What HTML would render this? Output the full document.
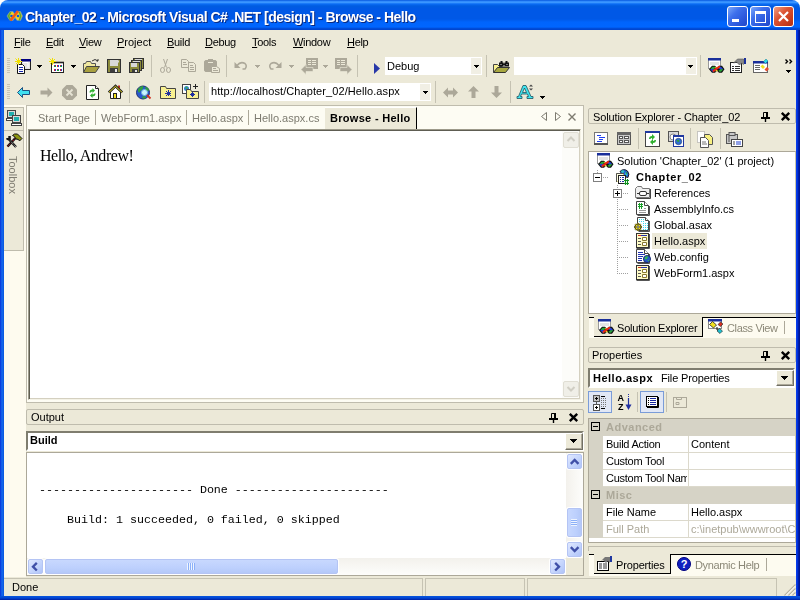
<!DOCTYPE html>
<html>
<head>
<meta charset="utf-8">
<title>Chapter_02 - Microsoft Visual C# .NET [design] - Browse - Hello</title>
<style>
html,body{margin:0;padding:0;}
body{width:800px;height:600px;overflow:hidden;position:relative;background:#ECE9D8;
 font-family:"Liberation Sans",sans-serif;font-size:11px;color:#000;}
.a{position:absolute;}
.t{position:absolute;white-space:nowrap;line-height:13px;height:13px;will-change:transform;}
.b{font-weight:bold;}
.g{color:#ACA899;}
u{text-decoration:underline;}
svg{position:absolute;overflow:visible;}
/* window frame */
#title{left:0;top:0;width:800px;height:30px;border-radius:8px 8px 0 0;
 background:linear-gradient(#0050D8 0,#2A82F8 1px,#3A96FF 2px,#3A96FF 2.500px,#0A6CF4 4px,#005CE0 6px,#0058E6 9px,#0058E6 19px,#0064FC 22px,#0066FF 27px,#004CD8 28.500px,#0042CC 30px);}
#bl{left:0;top:30px;width:4px;height:570px;background:linear-gradient(90deg,#0831D9 0,#166AEE 50%,#0855DD 100%);}
#br{left:796px;top:30px;width:4px;height:570px;background:linear-gradient(90deg,#0A40F0 0,#0030D8 40%,#00189C 70%,#00138C 100%);}
#bb{left:0;top:596px;width:800px;height:4px;background:linear-gradient(#0855DD 0,#0046D5 50%,#001EA0 100%);}
.wb{position:absolute;top:6px;width:19px;height:19px;border:1px solid #fff;border-radius:3px;
 background:linear-gradient(135deg,#7CA8FA 0,#3E70EC 35%,#2C58DC 70%,#2048C8 100%);}
#wclose{background:linear-gradient(135deg,#F0A084 0,#DC5434 40%,#C83C1C 75%,#B03014 100%);}

.grip{position:absolute;width:3px;height:15px;background:repeating-linear-gradient(#C9C5B4 0,#C9C5B4 1px,transparent 1px,transparent 2px);}
.sep{position:absolute;width:1px;height:22px;background:#C5C2B2;}
.dd{position:absolute;width:5px;height:3px;color:#000;background:linear-gradient(currentColor,currentColor) 0 0/5px 1px no-repeat,linear-gradient(currentColor,currentColor) 1px 1px/3px 1px no-repeat,linear-gradient(currentColor,currentColor) 2px 2px/1px 1px no-repeat;}
.dd7{position:absolute;width:7px;height:4px;color:#000;background:linear-gradient(currentColor,currentColor) 0 0/7px 1px no-repeat,linear-gradient(currentColor,currentColor) 1px 1px/5px 1px no-repeat,linear-gradient(currentColor,currentColor) 2px 2px/3px 1px no-repeat,linear-gradient(currentColor,currentColor) 3px 3px/1px 1px no-repeat;}
.ddg{color:#ACA899;}
.cb{position:absolute;height:18px;background:#fff;}
.cb .t{top:3px;left:2px;}
.cb i{position:absolute;right:1px;top:1px;bottom:1px;width:10px;background:#F1EFE4;}

/* left strip */
#stripbg{left:4px;top:105px;width:22px;height:472px;background:#FEFBEF;}
/* tab well */
#well{left:26px;top:105px;width:558px;height:298px;background:#FDFCF3;border:1px solid #BFBCAD;box-sizing:border-box;}
#docframe{left:28px;top:129px;width:553px;height:271px;box-sizing:border-box;border:1px solid;border-color:#9D9A8A #F4F2E6 #F4F2E6 #9D9A8A;box-shadow:inset 1px 1px 0 #5E5D52,inset -1px -1px 0 #D4D0C0;background:#fff;}
.tabt{color:#7D7B70;}
.tsep{position:absolute;width:1px;height:15px;top:110px;background:#ACA899;}
/* pane title */
.ptitle{position:absolute;height:14px;border:1px solid #BFBCAD;border-radius:2px;background:#ECE9D8;box-sizing:content-box;}
.white{background:#fff;}

.pin{position:absolute;}
.sbv{position:absolute;width:17px;background:linear-gradient(90deg,#F3F1EC 0,#FDFDFB 100%);}
.sbbtn{position:absolute;width:13px;height:13px;border:1px solid #B4C4F4;border-radius:2px;background:linear-gradient(135deg,#E0E8FF 0,#C2D3FC 60%,#B0C4F8 100%);box-shadow:0 0 0 1px #fff;}
.thumb{position:absolute;border:1px solid #B4C4F4;border-radius:2px;background:linear-gradient(#C8D8FE 0,#BDD0FD 60%,#B4C8F8 100%);box-shadow:0 0 0 1px #fff;}
.thumbv{position:absolute;border:1px solid #B4C4F4;border-radius:2px;background:linear-gradient(90deg,#C8D8FE 0,#BDD0FD 60%,#B4C8F8 100%);box-shadow:0 0 0 1px #fff;}
.combo{position:absolute;box-sizing:border-box;border:2px solid;border-color:#7F7D6F #fff #fff #7F7D6F;background:#fff;}
.cbtn{position:absolute;width:16px;height:15px;border:1px solid;border-color:#fff #716F64 #716F64 #fff;background:#ECE9D8;box-shadow:inset -1px -1px 0 #ACA899;}
.mono{font-family:"Liberation Mono",monospace;font-size:11.67px;white-space:pre;line-height:15px;height:15px;}

.tabstrip{position:absolute;left:589px;width:207px;height:20px;background:#FDFBF0;border-top:1px solid #000;}
.tabact{position:absolute;height:19px;background:#ECE9D8;border-right:1px solid #000;border-bottom:1px solid #000;}
.dots-h{position:absolute;height:1px;background:repeating-linear-gradient(90deg,#A0A0A0 0,#A0A0A0 1px,transparent 1px,transparent 2px);}
.dots-v{position:absolute;width:1px;background:repeating-linear-gradient(#A0A0A0 0,#A0A0A0 1px,transparent 1px,transparent 2px);}
.pm{position:absolute;width:7px;height:7px;border:1px solid #808080;background:#fff;}
.pm i{position:absolute;left:1px;top:3px;width:5px;height:1px;background:#000;}
.pm b{position:absolute;left:3px;top:1px;width:1px;height:5px;background:#000;}
.grow{position:absolute;left:603px;width:192px;height:16px;background:#fff;border-bottom:1px solid #DCD9CC;}
.gcat{position:absolute;left:589px;width:206px;height:17px;background:#D6D3C6;}
</style>
</head>
<body>
<!-- ===== window frame ===== -->
<div id="title" class="a"></div>
<div id="bl" class="a"></div><div id="br" class="a"></div><div id="bb" class="a"></div>
<div class="t b" style="left:25px;top:9px;font-size:14px;letter-spacing:-0.5px;line-height:16px;height:16px;color:#fff;text-shadow:1px 1px 0 #0A2A80;">Chapter_02 - Microsoft Visual C# .NET [design] - Browse - Hello</div>
<div class="a" style="left:0;top:0;width:8px;height:8px;background:#fff;z-index:-1"></div>
<div class="a" style="left:792px;top:0;width:8px;height:8px;background:#fff;z-index:-1"></div>
<svg style="left:6px;top:10px" width="17" height="12" viewBox="0 0 17 12"><path d="M4 1.500l3 0l2 3l2-3l3.500 0l2 4.500l-2 4.500l-3.500 0l-2-3l-2 3l-3 0l-3-4.500z" fill="#F4D020" stroke="#6098C8" stroke-width="0.800"/><path d="M1.500 6l2.500-4l1.500 0l-2 4l2 4.500l-1.500 0z" fill="#58A838"/><path d="M15.500 6l-1.500-4l-1.500 0l1.500 4l-1.500 4.500l1.500 0z" fill="#58A838"/><circle cx="5.500" cy="6" r="1.300" fill="#0054E3"/><circle cx="12" cy="6" r="1.300" fill="#0054E3"/><path d="M4.500 10.500l7.500-9.500" stroke="#F05818" stroke-width="2.600"/></svg>
<div class="wb" style="left:727px"></div>
<div class="a" style="left:732px;top:19px;width:7px;height:3px;background:#fff"></div>
<div class="wb" style="left:750px"></div>
<div class="a" style="left:755px;top:11px;width:9px;height:8px;border:1px solid #fff;border-top-width:3px"></div>
<div class="wb" id="wclose" style="left:773px"></div>
<svg style="left:778px;top:11px" width="11" height="11" viewBox="0 0 11 11"><path d="M1 1l9 9M10 1l-9 9" stroke="#fff" stroke-width="2.200"/></svg>

<!-- ===== menu bar ===== -->
<div id="menu">
<div class="t" style="left:14px;top:36px;letter-spacing:-0.3px"><u>F</u>ile</div>
<div class="t" style="left:46px;top:36px;letter-spacing:-0.3px"><u>E</u>dit</div>
<div class="t" style="left:79px;top:36px;letter-spacing:-0.3px"><u>V</u>iew</div>
<div class="t" style="left:117px;top:36px"><u>P</u>roject</div>
<div class="t" style="left:167px;top:36px;letter-spacing:-0.3px"><u>B</u>uild</div>
<div class="t" style="left:205px;top:36px;letter-spacing:-0.3px"><u>D</u>ebug</div>
<div class="t" style="left:252px;top:36px;letter-spacing:-0.3px"><u>T</u>ools</div>
<div class="t" style="left:293px;top:36px;letter-spacing:-0.3px"><u>W</u>indow</div>
<div class="t" style="left:347px;top:36px;letter-spacing:-0.3px"><u>H</u>elp</div>
</div>

<!-- ===== toolbars ===== -->
<div id="tb1">
<div class="grip" style="left:7px;top:58px"></div>
<!-- new project -->
<svg style="left:15px;top:58px" width="17" height="16" viewBox="0 0 17 16"><rect x="6.500" y="1.500" width="9" height="10" fill="#E4E4E4" stroke="#222"/><rect x="6" y="1" width="10" height="2.500" fill="#000080"/><path d="M8 4.500h5v5" fill="none" stroke="#fff"/><path d="M2.500 15.500v-9h5l2 2v7z" fill="#fff" stroke="#111"/><path d="M4 9.500h4M4 11.500h4M4 13.500h4" stroke="#1828B0"/><path d="M0.500 0.500l5 5M3.500 0v7M0 3.500h7M6 1l-5 5" stroke="#F0E000" stroke-width="1"/></svg>
<div class="dd" style="left:37px;top:65px"></div>
<!-- add new item -->
<svg style="left:49px;top:58px" width="16" height="16" viewBox="0 0 16 16"><rect x="2.500" y="4.500" width="12" height="10" fill="#fff" stroke="#222"/><path d="M2 4.500h13" stroke="#222" stroke-width="1.600"/><path d="M5 7h1v2h-1zM8 7h1v2h-1zM11 7h1v2h-1zM5 11h1v2h-1zM8 11h1v2h-1zM11 11h1v2h-1z" fill="#E02020"/><path d="M6 7h1v2h-1zM9 7h1v2h-1zM12 7h1v2h-1zM6 11h1v2h-1zM9 11h1v2h-1zM12 11h1v2h-1z" fill="#2040D0"/><path d="M5 8h2v1h-2zM8 12h2v1h-2zM11 8h2v1h-2z" fill="#18A040"/><path d="M0.500 0.500l5 5M3.500 0v7M0 3.500h7M6 1l-5 5" stroke="#F0E000" stroke-width="1"/></svg>
<div class="dd" style="left:71px;top:65px"></div>
<!-- open -->
<svg style="left:83px;top:58px" width="17" height="16" viewBox="0 0 17 16"><path d="M0.500 14.500V5.500h2l1-2h4l1 2h4v3" fill="#F0E8A0" stroke="#555"/><path d="M0.500 14.500l3-6h13l-4 6z" fill="#A8A040" stroke="#444"/><path d="M9 3q3-3 6 0l-1.500 0M15 3v-2" fill="none" stroke="#333"/></svg>
<!-- save -->
<svg style="left:107px;top:59px" width="14" height="14" viewBox="0 0 14 14"><rect x="0.500" y="0.500" width="13" height="13" fill="#8C8C3C" stroke="#333"/><rect x="3" y="1" width="8" height="6" fill="#D8D8D8"/><rect x="11" y="1.500" width="1" height="2" fill="#D8D8D8"/><rect x="3" y="9" width="8" height="4" fill="#3C3C3C"/><rect x="8" y="10" width="2" height="3" fill="#E8E8E8"/></svg>
<!-- save all -->
<svg style="left:129px;top:58px" width="16" height="15" viewBox="0 0 16 15"><rect x="4.500" y="0.500" width="10" height="10" fill="#8C8C3C" stroke="#333"/><rect x="6" y="1" width="7" height="2" fill="#D8D8D8"/><rect x="2.500" y="2.500" width="10" height="10" fill="#8C8C3C" stroke="#333"/><rect x="4" y="3" width="7" height="2" fill="#D8D8D8"/><rect x="0.500" y="4.500" width="10" height="10" fill="#8C8C3C" stroke="#333"/><rect x="2" y="5" width="6" height="4" fill="#D8D8D8"/><rect x="3" y="11" width="6" height="3" fill="#3C3C3C"/><rect x="6" y="12" width="2" height="2" fill="#E8E8E8"/></svg>
<div class="sep" style="left:151px;top:55px"></div>
<!-- cut -->
<svg style="left:160px;top:59px" width="11" height="14" viewBox="0 0 11 14"><path d="M3.500 0l3 8.500M7.500 0l-3 8.500" stroke="#ACA899" fill="none"/><ellipse cx="2.500" cy="11" rx="2" ry="2.500" fill="none" stroke="#ACA899"/><ellipse cx="8.500" cy="11" rx="2" ry="2.500" fill="none" stroke="#ACA899"/></svg>
<!-- copy -->
<svg style="left:181px;top:59px" width="16" height="13" viewBox="0 0 16 13"><path d="M0.500 0.500h5l2 2v6h-7z" fill="#ECE9D8" stroke="#ACA899"/><path d="M2 3.500h3M2 5.500h4" stroke="#ACA899"/><path d="M7.500 3.500h5l2 2v7h-7z" fill="#ECE9D8" stroke="#ACA899"/><path d="M9 6.500h3M9 8.500h4M9 10.500h4" stroke="#ACA899"/></svg>
<!-- paste -->
<svg style="left:204px;top:59px" width="16" height="14" viewBox="0 0 16 14"><rect x="0.500" y="1.500" width="12" height="11" rx="1.500" fill="#ACA899" stroke="#ACA899"/><rect x="4" y="0" width="5" height="2" fill="#ACA899"/><path d="M4 3.500h5" stroke="#ECE9D8"/><path d="M7.500 13.500v-6h5l3 2v4z" fill="#ECE9D8" stroke="#ACA899"/><path d="M9 9.500h3M9 11.500h5" stroke="#ACA899"/></svg>
<div class="sep" style="left:226px;top:55px"></div>
<!-- undo / redo -->
<svg style="left:234px;top:61px" width="14" height="9" viewBox="0 0 14 9"><path d="M3 4.500q3.500-4.500 8-2q2.500 2.500 0 5.500h-2.500" fill="none" stroke="#ACA899" stroke-width="1.500"/><path d="M0.500 1v6h6z" fill="#ACA899"/></svg>
<div class="dd ddg" style="left:255px;top:65px"></div>
<svg style="left:268px;top:61px" width="14" height="9" viewBox="0 0 14 9"><path d="M11 4.500q-3.500-4.500-8-2q-2.500 2.500 0 5.500h2.500" fill="none" stroke="#ACA899" stroke-width="1.500"/><path d="M13.500 1v6h-6z" fill="#ACA899"/></svg>
<div class="dd ddg" style="left:289px;top:65px"></div>
<!-- nav back / fwd -->
<svg style="left:301px;top:58px" width="17" height="16" viewBox="0 0 17 16"><rect x="5" y="0" width="12" height="11" fill="#ACA899"/><path d="M7 2.500h3M11 2.500h4M7 4.500h3M11 4.500h4M7 6.500h3M11 6.500h4" stroke="#ECE9D8"/><path d="M0 11.500l5-5v3h7v4h-7v3z" fill="#ACA899" stroke="#ECE9D8" stroke-width="0.600"/></svg>
<div class="dd ddg" style="left:323px;top:65px"></div>
<svg style="left:335px;top:58px" width="17" height="16" viewBox="0 0 17 16"><rect x="0" y="0" width="12" height="11" fill="#ACA899"/><path d="M2 2.500h3M6 2.500h4M2 4.500h3M6 4.500h4M2 6.500h3M6 6.500h4" stroke="#ECE9D8"/><path d="M17 11.500l-5-5v3h-7v4h7v3z" fill="#ACA899" stroke="#ECE9D8" stroke-width="0.600"/></svg>
<div class="sep" style="left:357px;top:55px"></div>
<!-- start -->
<svg style="left:374px;top:63px" width="6" height="11" viewBox="0 0 6 11"><path d="M0 0l6 5.500L0 11z" fill="#2838A8"/></svg>
<div class="cb" style="left:385px;top:57px;width:97px"><i></i><div class="t">Debug</div></div>
<div class="dd" style="left:474px;top:65px"></div>
<div class="sep" style="left:486px;top:55px"></div>
<!-- find in files -->
<svg style="left:493px;top:60px" width="17" height="14" viewBox="0 0 17 14"><path d="M0.500 12.500v-8h4l2 2h3" fill="#F8F090" stroke="#444"/><path d="M0.500 12.500l4-5h12l-4 5z" fill="#A8A840" stroke="#333"/><path d="M6 6.500v-4h1.500v-1.500h2v1.500h1v1h1v-1h1v-1.500h2v1.500h1.500v4z" fill="#111"/><path d="M7.500 4.500h1M10.500 5.500h1M13.500 4.500h1" stroke="#ddd"/></svg>
<div class="cb" style="left:514px;top:57px;width:183px"><i></i></div>
<div class="dd" style="left:688px;top:65px"></div>
<div class="sep" style="left:700px;top:55px"></div>
<!-- solution explorer / properties / toolbox icons -->
<svg style="left:708px;top:58px" width="17" height="16" viewBox="0 0 17 16"><rect x="0.500" y="0.500" width="12" height="10" fill="#fff" stroke="#9A9A9A"/><rect x="0" y="0" width="13" height="2.500" fill="#1A2F9A"/><rect x="2" y="4" width="9" height="3" fill="#E4E4E4"/><g transform="translate(0,-0.800)"><path d="M1 12l3-3.500h3l2 2l2-2h3l2.500 3.500l-2.500 3.500h-3l-2-2l-2 2h-3z" fill="#111"/><path d="M2.300 12l2.200-2.500h2l1 1l-2.500 2z" fill="#28A838"/><path d="M2.300 12l2.200 2.500h1l1-1.500l-1.500-1.500z" fill="#2040D8"/><path d="M6.500 9.500l1.500 1.500l1.500-1z" fill="#F0E020"/><path d="M15.200 12l-2.200-2.500h-1.500l-1 1.500l2 1.500z" fill="#2040D8"/><path d="M15.200 12l-2.200 2.500h-1.500l-1-1l2-1.500z" fill="#28A838"/><path d="M7 14l1.500-2l1.500 2z" fill="#F0E020"/><path d="M4.800 14.200l7-5" stroke="#E82818" stroke-width="2"/></g></svg>
<svg style="left:730px;top:58px" width="17" height="15" viewBox="0 0 17 15"><rect x="0.500" y="4.500" width="11" height="10" fill="#fff" stroke="#222"/><path d="M2 8.500h2M5 8.500h5M2 10.500h2M5 10.500h5M2 12.500h2M5 12.500h5" stroke="#333"/><path d="M3.500 5l4-4h6v5.500l-2-1.500l-2 2l-3-3z" fill="#8A8A8A" stroke="#555" stroke-width="0.600"/><rect x="14" y="0" width="2" height="6" fill="#1A2F9A"/></svg>
<svg style="left:753px;top:59px" width="16" height="14" viewBox="0 0 16 14"><rect x="0.500" y="2.500" width="14" height="11" fill="#fff" stroke="#666"/><rect x="0" y="2" width="15" height="2.500" fill="#1A2F9A"/><path d="M2 6.500h5M2 8.500h5M2 10.500h5" stroke="#666"/><path d="M7.500 7.500l2-2l2.500 2.500l-2 2z" fill="#F0E020"/><path d="M10.500 2.500l2.500-2.500l2 2l-2.500 2.500z" fill="#30D8E8" stroke="#208090" stroke-width="0.500"/><path d="M11.500 10.500l2.500-2.500l2 2l-2.500 2.500z" fill="#E85030"/></svg>
<!-- chevron -->
<svg style="left:785px;top:59px" width="8" height="14" viewBox="0 0 8 14"><path d="M0.500 0.500l2 2l-2 2M4.500 0.500l2 2l-2 2" fill="none" stroke="#000" stroke-width="1.400"/></svg>
<div class="dd" style="left:786px;top:70px"></div>
</div>
<div id="tb2">
<div class="grip" style="left:7px;top:84px"></div>
<!-- back -->
<svg style="left:17px;top:87px" width="13" height="11" viewBox="0 0 13 11"><path d="M0.500 5.500l5-5v3h7v4h-7v3z" fill="#40E0F0" stroke="#205080"/></svg>
<svg style="left:40px;top:87px" width="13" height="11" viewBox="0 0 13 11"><path d="M12.500 5.500l-5-5v3h-7v4h7v3z" fill="#ACA899"/></svg>
<!-- stop -->
<svg style="left:62px;top:85px" width="15" height="15" viewBox="0 0 15 15"><path d="M4.500 0h6l4.500 4.500v6l-4.500 4.500h-6l-4.500-4.500v-6z" fill="#ACA899"/><path d="M4.500 4.500l6 6M10.500 4.500l-6 6" stroke="#E6E3D4" stroke-width="1.800"/></svg>
<!-- refresh -->
<svg style="left:86px;top:85px" width="14" height="15" viewBox="0 0 14 15"><path d="M0.500 0.500h9l3 3v11h-12z" fill="#fff" stroke="#222"/><path d="M9.500 0.500v3h3" fill="#fff" stroke="#222"/><path d="M3.500 7.500q0-3 3-3v-1.500l2.500 2.500l-2.500 2.500v-1.500q-1.500 0-1.500 1z" fill="#30B030"/><path d="M9.500 8.500q0 3-3 3v1.500l-2.500-2.500l2.500-2.500v1.500q1.500 0 1.500-1z" fill="#30B030"/></svg>
<!-- home -->
<svg style="left:108px;top:85px" width="15" height="15" viewBox="0 0 15 15"><rect x="10" y="0.500" width="2" height="4" fill="#C03020"/><path d="M2.500 7v6.500h10v-6.500l-5-5z" fill="#fff" stroke="#222"/><path d="M0.700 7.300l6.800-6.300l6.800 6.300" fill="none" stroke="#222" stroke-width="2.400"/><path d="M1 7.300l6.500-6l6.500 6" fill="none" stroke="#F0E020" stroke-width="1"/><rect x="5.500" y="8.500" width="3" height="5" fill="#F0E020" stroke="#222"/></svg>
<div class="sep" style="left:129px;top:81px"></div>
<!-- web search -->
<svg style="left:136px;top:85px" width="16" height="15" viewBox="0 0 16 15"><circle cx="7" cy="7.500" r="6.500" fill="#2858D0" stroke="#203070"/><path d="M2 4q2-3 5-3q1 2-1 3.500q-2 1.500-3 3.500q-1.500-2-1-4zM9 2q3 0 4 3q-1 2-3 1.500zM6 13q0-2 2-2q2 0 2 2q-2 1-4 0z" fill="#30A040"/><circle cx="8.500" cy="7.500" r="3" fill="#C8F4FF" stroke="#70B0D8"/><path d="M11 10l3.500 3.500" stroke="#D03020" stroke-width="1.800"/></svg>
<!-- favorites -->
<svg style="left:160px;top:85px" width="16" height="14" viewBox="0 0 16 14"><path d="M0.500 13.500v-12h5l1 2h9v10z" fill="#F8F090" stroke="#444"/><path d="M8.500 5v6M5 8.500h6M6 6l5 5M11 6l-5 5" stroke="#2030A0"/></svg>
<!-- add favorite -->
<svg style="left:182px;top:84px" width="17" height="15" viewBox="0 0 17 15"><rect x="0.500" y="0.500" width="8" height="9" fill="#fff" stroke="#444"/><circle cx="4.500" cy="4.500" r="2.500" fill="#3080D0"/><path d="M3 3q2-1 3 1q-2 2-3-1z" fill="#40B050"/><path d="M4.500 14.500v-9h4l1 2h7v7z" fill="#F8F090" stroke="#444"/><path d="M10.500 8v5M8 10.500h5M9 9l3 3M12 9l-3 3" stroke="#2030A0"/><path d="M11 2.500h5M13.500 0v5" stroke="#222"/></svg>
<div class="sep" style="left:204px;top:81px"></div>
<div class="cb" style="left:209px;top:83px;width:222px"><i></i><div class="t" style="top:2px;letter-spacing:0.08px">http://localhost/Chapter_02/Hello.aspx</div></div>
<div class="dd" style="left:423px;top:91px"></div>
<div class="sep" style="left:435px;top:81px"></div>
<svg style="left:443px;top:87px" width="15" height="11" viewBox="0 0 15 11"><path d="M0 5.500l5-5v3h5v-3l5 5l-5 5v-3h-5v3z" fill="#ACA899"/></svg>
<svg style="left:468px;top:86px" width="11" height="12" viewBox="0 0 11 12"><path d="M5.500 0l5.500 5.500h-3.500v6.500h-4v-6.500h-3.500z" fill="#ACA899"/></svg>
<svg style="left:491px;top:86px" width="11" height="12" viewBox="0 0 11 12"><path d="M5.500 12l5.500-5.500h-3.500v-6.500h-4v6.500h-3.500z" fill="#ACA899"/></svg>
<div class="sep" style="left:510px;top:81px"></div>
<!-- font size -->
<svg style="left:517px;top:84px" width="17" height="16" viewBox="0 0 17 16"><path d="M6 1.500h3l5 11h2v2h-6v-2h1.500l-1-2.500h-6l-1 2.500h1.500v2h-5v-2h1.500zM7.500 4l-2 4.500h4z" fill="#40E8F0" stroke="#205060" stroke-width="0.800"/><path d="M12 2.500h4l-2-2zM12 4.500h4l-2 2z" fill="#444"/></svg>
<div class="dd" style="left:540px;top:96px"></div>
</div>

<!-- ===== left strip ===== -->
<div id="strip">
<div id="stripbg" class="a"></div>
<div class="a" style="left:4px;top:107px;width:19px;height:23px;background:#ECE9D8;border:1px solid #BFBCAD;border-left:0;box-sizing:content-box;height:22px"></div>
<div class="a" style="left:4px;top:131px;width:19px;height:119px;background:#ECE9D8;border:1px solid #BFBCAD;border-left:0;border-top:0;"></div>
<!-- server explorer icon -->
<svg style="left:6px;top:110px" width="16" height="16" viewBox="0 0 16 16"><rect x="1.500" y="0.500" width="8" height="7" fill="#D8D8D8" stroke="#444"/><rect x="3" y="2" width="5" height="4" fill="#20B0B0"/><rect x="0.500" y="8.500" width="10" height="2" fill="#fff" stroke="#444"/><rect x="6.500" y="5.500" width="8" height="7" fill="#D8D8D8" stroke="#444"/><rect x="8" y="7" width="5" height="4" fill="#20B0B0"/><rect x="5.500" y="13.500" width="10" height="2" fill="#fff" stroke="#444"/></svg>
<!-- toolbox icon -->
<svg style="left:6px;top:134px" width="16" height="14" viewBox="0 0 16 14"><path d="M1.500 12.500l8-8.500" stroke="#111" stroke-width="2.400"/><path d="M1.500 12.500l8-8.500" stroke="#D02030" stroke-width="0.900" stroke-dasharray="1.500 1"/><path d="M6.500 1.500l2-1.500h3l4.500 4.500l-2.500 2.500l-1-1.500l-2.500-0.500l-1.500-2.500z" fill="#8C9410" stroke="#111" stroke-width="1"/><path d="M10 13l-6.500-7" stroke="#111" stroke-width="2.400"/><path d="M10 13l-6.500-7" stroke="#fff" stroke-width="0.800" stroke-dasharray="1 1"/><path d="M0.300 5.500v-1.500h2v-2h2.500v4l-1.500 1z" fill="#111"/></svg>
<div class="t" style="left:6px;top:156px;transform-origin:0 0;transform:rotate(90deg) translate(0,-13px);color:#7D7B70;font-size:11px">Toolbox</div>
</div>

<!-- ===== document area ===== -->
<div id="doc">
<div id="well" class="a"></div>
<div class="t tabt" style="left:38px;top:112px">Start Page</div>
<div class="tsep" style="left:95px"></div>
<div class="t tabt" style="left:101px;top:112px">WebForm1.aspx</div>
<div class="tsep" style="left:186px"></div>
<div class="t tabt" style="left:192px;top:112px">Hello.aspx</div>
<div class="tsep" style="left:248px"></div>
<div class="t tabt" style="left:254px;top:112px">Hello.aspx.cs</div>
<div class="a" style="left:325px;top:107px;width:91px;height:22px;background:#ECE9D8;border-right:1px solid #000;border-top:1px solid #fff;"></div>
<div class="t b" style="left:330px;top:112px;letter-spacing:0.3px">Browse - Hello</div>
<!-- tab scroll arrows + close -->
<svg style="left:541px;top:112px" width="6" height="9" viewBox="0 0 6 9"><path d="M5.500 0.500v8l-5-4z" fill="none" stroke="#7D7B70"/></svg>
<svg style="left:555px;top:112px" width="6" height="9" viewBox="0 0 6 9"><path d="M0.500 0.500v8l5-4z" fill="none" stroke="#7D7B70"/></svg>
<svg style="left:568px;top:113px" width="8" height="8" viewBox="0 0 8 8"><path d="M0.500 0.500l7 7M7.500 0.500l-7 7" stroke="#7D7B70" stroke-width="1.400"/></svg>
<div id="docframe" class="a"></div>
<div class="t" style="left:40px;top:147px;font-family:'Liberation Serif',serif;font-size:16px;letter-spacing:-0.43px;line-height:18px;height:18px">Hello, Andrew!</div>
<!-- disabled v-scrollbar -->
<div class="a" style="left:562px;top:131px;width:17px;height:267px;background:#FCFCF9;"></div>
<div class="a" style="left:563px;top:132px;width:14px;height:14px;border:1px solid #E0DED4;border-radius:2px;background:#F0EFE8;"></div>
<svg style="left:567px;top:136px" width="8" height="6" viewBox="0 0 8 6"><path d="M0.500 5l3.500-3.500l3.500 3.500" fill="none" stroke="#D0CEC4" stroke-width="2"/></svg>
<div class="a" style="left:563px;top:381px;width:14px;height:14px;border:1px solid #E0DED4;border-radius:2px;background:#F0EFE8;"></div>
<svg style="left:567px;top:386px" width="8" height="6" viewBox="0 0 8 6"><path d="M0.500 1l3.500 3.500l3.500-3.500" fill="none" stroke="#D0CEC4" stroke-width="2"/></svg>
</div>

<!-- ===== output pane ===== -->
<div id="out">
<div class="ptitle" style="left:26px;top:409px;width:556px;"></div>
<div class="t" style="left:31px;top:411px">Output</div>
<svg style="left:549px;top:413px" width="9" height="10" viewBox="0 0 9 10"><path d="M2.500 0.500h4v5h-4z" fill="none" stroke="#000"/><path d="M6 0v6M0 6h9" stroke="#000" stroke-width="2"/><path d="M4.500 6v4" stroke="#000" stroke-width="1.400"/></svg><svg style="left:569px;top:413px" width="9" height="9" viewBox="0 0 9 9"><path d="M0.800 0.800l7.400 7.400M8.200 0.800l-7.400 7.400" stroke="#000" stroke-width="2.400"/></svg>
<div class="combo" style="left:26px;top:431px;width:558px;height:20px"></div>
<div class="t b" style="left:29.500px;top:434px">Build</div>
<div class="cbtn" style="left:565px;top:433px"></div>
<div class="dd7" style="left:570px;top:439px"></div>
<div class="a white" style="left:26px;top:452px;width:558px;height:124px;box-sizing:border-box;border:1px solid #ACA899;"></div>
<div class="t mono" style="left:39px;top:483px">---------------------- Done ----------------------</div>
<div class="t mono" style="left:39px;top:513px">    Build: 1 succeeded, 0 failed, 0 skipped</div>
<!-- v scrollbar -->
<div class="sbv" style="left:566px;top:453px;height:105px"></div>
<div class="sbbtn" style="left:567px;top:454px"></div><svg style="left:570px;top:458px" width="9.300" height="7" viewBox="0 0 8 6"><path d="M0.700 5l3.300-3.300l3.300 3.300" fill="none" stroke="#4050A8" stroke-width="2"/></svg>
<div class="thumbv" style="left:567px;top:508px;width:13px;height:27px"></div>
<div class="a" style="left:571px;top:519px;width:6px;height:7px;background:repeating-linear-gradient(#EEF4FE 0,#EEF4FE 1px,#8CB0F8 1px,#8CB0F8 2px)"></div>
<div class="sbbtn" style="left:567px;top:542px"></div><svg style="left:570px;top:546px" width="9.300" height="7" viewBox="0 0 8 6"><path d="M0.700 1l3.300 3.300l3.300-3.300" fill="none" stroke="#4050A8" stroke-width="2"/></svg>
<!-- h scrollbar -->
<div class="a" style="left:27px;top:558px;width:539px;height:17px;background:linear-gradient(#F3F1EC 0,#FDFDFB 100%)"></div>
<div class="sbbtn" style="left:28px;top:559px"></div><svg style="left:31px;top:562px" width="7" height="9.300" viewBox="0 0 6 8"><path d="M5 0.700l-3.300 3.300l3.300 3.300" fill="none" stroke="#4050A8" stroke-width="2"/></svg>
<div class="thumb" style="left:45px;top:559px;width:291px;height:13px"></div>
<div class="a" style="left:187px;top:563px;width:8px;height:7px;background:repeating-linear-gradient(90deg,#EEF4FE 0,#EEF4FE 1px,#8CB0F8 1px,#8CB0F8 2px)"></div>
<div class="sbbtn" style="left:550px;top:559px"></div><svg style="left:554px;top:562px" width="7" height="9.300" viewBox="0 0 6 8"><path d="M1 0.700l3.300 3.300l-3.300 3.300" fill="none" stroke="#4050A8" stroke-width="2"/></svg>
<div class="a" style="left:566px;top:558px;width:17px;height:17px;background:#ECE9D8"></div>
</div>

<!-- ===== solution explorer ===== -->
<div id="sol">
<div class="ptitle" style="left:588px;top:108px;width:206px;"></div>
<div class="t" style="left:593px;top:111px;letter-spacing:-0.13px">Solution Explorer - Chapter_02</div>
<svg style="left:761px;top:112px" width="9" height="10" viewBox="0 0 9 10"><path d="M2.500 0.500h4v5h-4z" fill="none" stroke="#000"/><path d="M6 0v6M0 6h9" stroke="#000" stroke-width="2"/><path d="M4.500 6v4" stroke="#000" stroke-width="1.400"/></svg><svg style="left:781px;top:112px" width="9" height="9" viewBox="0 0 9 9"><path d="M0.800 0.800l7.400 7.400M8.200 0.800l-7.400 7.400" stroke="#000" stroke-width="2.400"/></svg>
<!-- toolbar -->
<svg style="left:594px;top:131px" width="16" height="16" viewBox="0 0 16 16"><rect x="0.500" y="1.500" width="13" height="12" fill="#fff" stroke="#777"/><rect x="0" y="12" width="14" height="2" fill="#555"/><path d="M3 4.500h4M5 6.500h6M5 8.500h4M3 10.500h5" stroke="#2040F0"/></svg>
<svg style="left:617px;top:131px" width="16" height="16" viewBox="0 0 16 16"><rect x="0.500" y="1.500" width="13" height="12" fill="#C8C8C8" stroke="#555"/><rect x="0" y="1" width="14" height="3" fill="#666"/><rect x="2.500" y="5.500" width="3" height="2" fill="#fff" stroke="#555"/><rect x="7.500" y="5.500" width="4" height="2" fill="#fff" stroke="#555"/><rect x="2.500" y="9.500" width="3" height="2" fill="#fff" stroke="#555"/><rect x="7.500" y="9.500" width="4" height="2" fill="#fff" stroke="#555"/></svg>
<div class="sep" style="left:638px;top:128px;height:21px"></div>
<svg style="left:645px;top:131px" width="16" height="16" viewBox="0 0 16 16"><rect x="0.500" y="0.500" width="14" height="15" fill="#fff" stroke="#444"/><rect x="0" y="0" width="15" height="2" fill="#2038A0"/><path d="M4 8q0-3 3-3v-2l3 3l-3 3v-2q-1.500 0-1.500 1z" fill="#30B030"/><path d="M11 9q0 3-3 3v2l-3-3l3-3v2q1.500 0 1.500-1z" fill="#30B030"/></svg>
<svg style="left:668px;top:131px" width="17" height="16" viewBox="0 0 17 16"><rect x="0.500" y="0.500" width="10" height="10" fill="#D8D8D8" stroke="#555"/><circle cx="5" cy="6" r="3" fill="#fff" stroke="#888"/><rect x="5.500" y="4.500" width="10" height="11" fill="#fff" stroke="#2038A0"/><rect x="5" y="4" width="11" height="2" fill="#2038A0"/><circle cx="10.500" cy="10.500" r="3.200" fill="#3070D0" stroke="#203070" stroke-width="0.600"/><path d="M8.500 9.500q2-1.500 3 0.500q-1.500 2-3-0.500z" fill="#30A040"/></svg>
<div class="sep" style="left:690px;top:128px;height:21px"></div>
<svg style="left:697px;top:131px" width="16" height="17" viewBox="0 0 16 17"><path d="M0.500 0.500h7v11h-7z" fill="#fff" stroke="#999" stroke-dasharray="1 1"/><path d="M7.500 3.500h5l3 3v7h-8z" fill="#F8F080" stroke="#555"/><path d="M3.500 6.500h5l3 3v7h-8z" fill="#fff" stroke="#555"/><path d="M5 11h4M5 13h5" stroke="#777"/></svg>
<div class="sep" style="left:720px;top:128px;height:21px"></div>
<svg style="left:726px;top:132px" width="17" height="15" viewBox="0 0 17 15"><rect x="0.500" y="2.500" width="11" height="9" fill="#C8C8C8" stroke="#555"/><rect x="3" y="0.500" width="6" height="3" fill="#C8C8C8" stroke="#555"/><path d="M2 5h2M2 7h2M2 9h2" stroke="#555"/><rect x="5.500" y="7.500" width="11" height="7" fill="#fff" stroke="#444"/><path d="M7 10h2M7 12h2" stroke="#444"/><path d="M10 10h5M10 12h5" stroke="#2040D0"/></svg>
<!-- tree -->
<div class="a white" style="left:588px;top:151px;width:208px;height:163px;box-sizing:border-box;border:1px solid #ACA899;border-right-color:#CCC6A8"></div>
<svg style="left:597px;top:153px" width="17" height="16" viewBox="0 0 17 16"><rect x="0.500" y="0.500" width="12" height="10" fill="#fff" stroke="#9A9A9A"/><rect x="0" y="0" width="13" height="2.500" fill="#1A2F9A"/><rect x="2" y="4" width="9" height="3" fill="#E4E4E4"/><g transform="translate(0,-0.800)"><path d="M1 12l3-3.500h3l2 2l2-2h3l2.500 3.500l-2.500 3.500h-3l-2-2l-2 2h-3z" fill="#111"/><path d="M2.300 12l2.200-2.500h2l1 1l-2.500 2z" fill="#28A838"/><path d="M2.300 12l2.200 2.500h1l1-1.500l-1.500-1.500z" fill="#2040D8"/><path d="M6.500 9.500l1.500 1.500l1.500-1z" fill="#F0E020"/><path d="M15.200 12l-2.200-2.500h-1.500l-1 1.500l2 1.500z" fill="#2040D8"/><path d="M15.200 12l-2.200 2.500h-1.500l-1-1l2-1.500z" fill="#28A838"/><path d="M7 14l1.500-2l1.500 2z" fill="#F0E020"/><path d="M4.800 14.200l7-5" stroke="#E82818" stroke-width="2"/></g></svg>
<div class="t" style="left:617px;top:155px">Solution 'Chapter_02' (1 project)</div>
<div class="dots-v" style="left:597px;top:170px;height:4px"></div>
<div class="pm" style="left:593px;top:173px"><i></i></div>
<div class="dots-h" style="left:603px;top:177px;width:6px"></div>
<!-- project icon -->
<svg style="left:616px;top:169px" width="14" height="16" viewBox="0 0 14 16"><path d="M4 2.500q3.500-3.500 7.500-0.500q2.500 3 0.500 6.500l-4-1z" fill="#2860D8" stroke="#111" stroke-width="0.900"/><path d="M5 2q2-1.500 3.500 0q-0.500 2-2.500 2zM9 3.500q2 0 2.500 2.500l-2 1z" fill="#30C8C0"/><path d="M9.500 2l2 2l-1 1.500z" fill="#30A040"/><rect x="0.500" y="4.500" width="7" height="8" fill="#FFFFE0" stroke="#C8B820" stroke-dasharray="1 1"/><path d="M0.500 13v-8.500h7.500" fill="none" stroke="#555"/><rect x="2.500" y="6.500" width="7" height="8" fill="#fff" stroke="#222"/><path d="M4 8.500h1M6 8.500h2M4 10.500h1M6 10.500h2M4 12.500h1M6 12.500h2" stroke="#2030A0"/><path d="M9.500 10v6M11.500 10v6M8 11.500h5M8 14.500h5" stroke="#109020" stroke-width="1.100"/></svg>
<div class="t b" style="left:636px;top:171px;letter-spacing:0.6px">Chapter_02</div>
<div class="dots-v" style="left:617px;top:185px;height:89px"></div>
<div class="pm" style="left:613px;top:189px"><i></i><b></b></div>
<div class="dots-h" style="left:623px;top:193px;width:5px"></div>
<!-- references -->
<svg style="left:635px;top:186px" width="16" height="13" viewBox="0 0 16 13"><path d="M0.500 11.500v-9l2-2h4l1 2h7v9z" fill="#F0F0F0" stroke="#777"/><path d="M15.500 3v9.500h-14" fill="none" stroke="#444"/><rect x="4.500" y="5.500" width="7" height="4" rx="1.500" fill="#fff" stroke="#333"/><path d="M2 7.500h3M11 7.500h3" stroke="#333"/></svg>
<div class="t" style="left:654px;top:187px">References</div>
<div class="dots-h" style="left:619px;top:209px;width:9px"></div>
<svg style="left:636px;top:201px" width="14" height="15" viewBox="0 0 14 15"><path d="M0.500 0.500h8l4 4v9h-12z" fill="#fff" stroke="#444"/><path d="M8.500 0.500v4h4" fill="#fff" stroke="#444"/><path d="M13.500 5v9.500h-12" fill="none" stroke="#555"/><path d="M3.500 2v6M5.500 2v6M2 3.500h5M2 5.500h5" stroke="#18A028"/><path d="M3 9.500h7M3 11.500h7M8 7.500h2" stroke="#999"/></svg>
<div class="t" style="left:654px;top:203px">AssemblyInfo.cs</div>
<div class="dots-h" style="left:619px;top:225px;width:9px"></div>
<svg style="left:633px;top:217px" width="17" height="16" viewBox="0 0 17 16"><path d="M4.500 0.500h8l3 3v10h-11z" fill="#fff" stroke="#444"/><path d="M12.500 0.500v3h3" fill="#fff" stroke="#444"/><path d="M16.500 4v10.500h-11" fill="none" stroke="#555"/><path d="M6 2.500h6M6 4.500h6M10 6.500h5M10 8.500h5M10 10.500h5M10 12.500h5" stroke="#40D8E8" stroke-dasharray="1 1"/><path d="M5 6v1.300M5 12.700v1.300M1 10h1.300M7.700 10h1.300M2.200 7.200l1 1M7.800 7.200l-1 1M2.200 12.800l1-1M7.800 12.800l-1-1" stroke="#222" stroke-width="2.200"/><circle cx="5" cy="10" r="3" fill="#F0E020" stroke="#222"/><path d="M5 6.300v1M5 12.700v1M1.300 10h1M7.700 10h1M2.400 7.400l0.800 0.800M7.600 7.400l-0.800 0.800M2.400 12.600l0.800-0.800M7.600 12.600l-0.800-0.800" stroke="#F0E020" stroke-width="1.200"/><circle cx="5" cy="10" r="1.200" fill="#fff" stroke="#222" stroke-width="0.800"/></svg>
<div class="t" style="left:654px;top:219px">Global.asax</div>
<div class="dots-h" style="left:619px;top:241px;width:9px"></div>
<svg style="left:636px;top:233px" width="14" height="16" viewBox="0 0 14 16"><rect x="0.500" y="0.500" width="12" height="14" fill="#FFFCC8" stroke="#333"/><path d="M13.500 1v14.500h-13" fill="none" stroke="#555"/><path d="M2 2.500h9" stroke="#2030B0"/><path d="M2 2.500h3" stroke="#D03020"/><path d="M2 5.500h3M2 8.500h3M2 11.500h3" stroke="#555"/><path d="M6.500 4.500h4v3h-4zM6.500 9.500h4v3h-4z" fill="#fff" stroke="#887830" stroke-width="1"/></svg>
<div class="a" style="left:652px;top:233px;width:55px;height:16px;background:#ECE9D8"></div>
<div class="t" style="left:654px;top:235px">Hello.aspx</div>
<div class="dots-h" style="left:619px;top:257px;width:9px"></div>
<svg style="left:636px;top:249px" width="16" height="15" viewBox="0 0 16 15"><path d="M0.500 0.500h8l4 4v9h-12z" fill="#fff" stroke="#444"/><path d="M8.500 0.500v4h4" fill="#fff" stroke="#444"/><path d="M13.500 5v9.500h-12" fill="none" stroke="#555"/><path d="M2 3.500h5M2 5.500h7M2 7.500h5M2 9.500h4M2 11.500h4" stroke="#2030B0"/><circle cx="11" cy="10" r="3.600" fill="#2458C8" stroke="#102060" stroke-width="0.800"/><path d="M8.500 9q1.500-2.500 3.500-1.500q-0.500 2.500-2.500 3z" fill="#38C048"/><path d="M11.500 11.500l2-1l-0.500 2z" fill="#38C048"/></svg>
<div class="t" style="left:654px;top:251px">Web.config</div>
<div class="dots-h" style="left:619px;top:273px;width:9px"></div>
<svg style="left:636px;top:265px" width="14" height="16" viewBox="0 0 14 16"><rect x="0.500" y="0.500" width="12" height="14" fill="#FFFCC8" stroke="#333"/><path d="M13.500 1v14.500h-13" fill="none" stroke="#555"/><path d="M2 2.500h9" stroke="#2030B0"/><path d="M2 2.500h3" stroke="#D03020"/><path d="M2 5.500h3M2 8.500h3M2 11.500h3" stroke="#555"/><path d="M6.500 4.500h4v3h-4zM6.500 9.500h4v3h-4z" fill="#fff" stroke="#887830" stroke-width="1"/></svg>
<div class="t" style="left:654px;top:267px">WebForm1.aspx</div>
<!-- tabs -->
<div class="tabstrip" style="top:317px"></div>
<div class="tabact" style="left:594px;top:317px;width:108px"></div>
<svg style="left:598px;top:319px" width="17" height="16" viewBox="0 0 17 16"><rect x="0.500" y="0.500" width="12" height="10" fill="#fff" stroke="#9A9A9A"/><rect x="0" y="0" width="13" height="2.500" fill="#1A2F9A"/><rect x="2" y="4" width="9" height="3" fill="#E4E4E4"/><g transform="translate(0,-0.800)"><path d="M1 12l3-3.500h3l2 2l2-2h3l2.500 3.500l-2.500 3.500h-3l-2-2l-2 2h-3z" fill="#111"/><path d="M2.300 12l2.200-2.500h2l1 1l-2.500 2z" fill="#28A838"/><path d="M2.300 12l2.200 2.500h1l1-1.500l-1.500-1.500z" fill="#2040D8"/><path d="M6.500 9.500l1.500 1.500l1.500-1z" fill="#F0E020"/><path d="M15.200 12l-2.200-2.500h-1.500l-1 1.500l2 1.500z" fill="#2040D8"/><path d="M15.200 12l-2.200 2.500h-1.500l-1-1l2-1.500z" fill="#28A838"/><path d="M7 14l1.500-2l1.500 2z" fill="#F0E020"/><path d="M4.800 14.200l7-5" stroke="#E82818" stroke-width="2"/></g></svg>
<div class="t" style="left:617px;top:322px;letter-spacing:-0.2px">Solution Explorer</div>
<svg style="left:708px;top:319px" width="16" height="15" viewBox="0 0 16 15"><rect x="0.500" y="0.500" width="13" height="9" fill="#fff" stroke="#888"/><rect x="0" y="0" width="14" height="2.500" fill="#1A2F9A"/><path d="M9 8v3h1" fill="none" stroke="#111"/><path d="M1.500 5.500l3-3l4 3.500l-3 3z" fill="#F0E020" stroke="#222" stroke-width="0.800"/><path d="M10 5.500l2.500-2.500l2.500 2l-2.500 2.500z" fill="#D83020" stroke="#222" stroke-width="0.600"/><path d="M9 12l2.500-2.500l3 2.500l-2.500 2.500z" fill="#20C0D0" stroke="#222" stroke-width="0.600"/></svg>
<div class="t" style="left:727px;top:322px;letter-spacing:-0.35px;color:#8C8978">Class View</div>
<div class="a" style="left:784px;top:321px;width:1px;height:13px;background:#ACA899"></div>
</div>

<!-- ===== properties ===== -->
<div id="prop">
<div class="ptitle" style="left:588px;top:347px;width:206px;"></div>
<div class="t" style="left:592px;top:349px">Properties</div>
<svg style="left:761px;top:351px" width="9" height="10" viewBox="0 0 9 10"><path d="M2.500 0.500h4v5h-4z" fill="none" stroke="#000"/><path d="M6 0v6M0 6h9" stroke="#000" stroke-width="2"/><path d="M4.500 6v4" stroke="#000" stroke-width="1.400"/></svg><svg style="left:781px;top:351px" width="9" height="9" viewBox="0 0 9 9"><path d="M0.800 0.800l7.400 7.400M8.200 0.800l-7.400 7.400" stroke="#000" stroke-width="2.400"/></svg>
<div class="combo" style="left:588px;top:368px;width:207px;height:20px"></div>
<div class="t b" style="left:593px;top:372px;letter-spacing:0.5px">Hello.aspx</div>
<div class="t" style="left:661px;top:372px;letter-spacing:-0.15px">File Properties</div>
<div class="cbtn" style="left:776px;top:370px;height:14px"></div>
<div class="dd7" style="left:781px;top:376px"></div>
<!-- toolbar -->
<div class="a" style="left:588px;top:391px;width:24px;height:22px;border:1px solid #7A9CD8;background:#E1E7F5;box-sizing:border-box"></div>
<svg style="left:593px;top:395px" width="15" height="16" viewBox="0 0 15 16"><rect x="0.500" y="0.500" width="6" height="6" fill="#C4C4C4" stroke="#555"/><path d="M2 3.500h3M3.500 2v3" stroke="#000"/><rect x="0.500" y="9.500" width="6" height="6" fill="#fff" stroke="#555"/><path d="M2 12.500h3M3.500 11v3" stroke="#000"/><path d="M3.500 7v2" stroke="#555"/><path d="M8 1.500h4M8 13.500h4" stroke="#000"/><path d="M8 3.500h6M8 5.500h6M8 7.500h6M8 9.500h6M8 11.500h6" stroke="#777" stroke-dasharray="1 1"/></svg>
<svg style="left:617px;top:393px" width="16" height="18" viewBox="0 0 16 18"><text x="0.500" y="8" font-family="Liberation Sans,sans-serif" font-size="9" font-weight="bold" fill="#000">A</text><text x="1" y="17" font-family="Liberation Sans,sans-serif" font-size="9" font-weight="bold" fill="#000">Z</text><path d="M11.500 1v4" stroke="#2030A0" stroke-dasharray="1 1"/><path d="M11.500 5v8" stroke="#2030A0" stroke-width="1.200"/><path d="M8.500 11.500h6l-3 5.500z" fill="#2030A0"/></svg>
<div class="sep" style="left:637px;top:392px;height:20px"></div>
<div class="a" style="left:640px;top:391px;width:24px;height:22px;border:1px solid #7A9CD8;background:#E1E7F5;box-sizing:border-box"></div>
<svg style="left:646px;top:396px" width="13" height="12" viewBox="0 0 13 12"><rect x="0.500" y="0.500" width="11" height="10" fill="#fff" stroke="#000"/><path d="M12.500 1v10.500h-11.500" fill="none" stroke="#000"/><path d="M4 2.500h6M4 4.500h6M4 6.500h6M4 8.500h6" stroke="#1828A0"/><path d="M2 2.500h1M2 4.500h1M2 6.500h1M2 8.500h1" stroke="#000"/></svg>
<div class="sep" style="left:666px;top:392px;height:20px"></div>
<svg style="left:673px;top:396px" width="14" height="12" viewBox="0 0 14 12"><rect x="0.500" y="1.500" width="13" height="10" fill="none" stroke="#ACA899"/><path d="M3.500 1.500v2h5v-2M3 6.500h3v2h-3z" fill="none" stroke="#ACA899"/></svg>
<!-- grid -->
<div class="a white" style="left:588px;top:418px;width:208px;height:125px;box-sizing:border-box;border:1px solid #ACA899;border-right-color:#CCC6A8"></div>
<div class="a" style="left:589px;top:419px;width:14px;height:119px;background:#D6D3C6"></div>
<div class="gcat" style="top:419px"></div>
<div class="pm" style="left:591px;top:422px;border-color:#000;background:#D6D3C6"><i></i></div>
<div class="t b g" style="left:606px;top:421px;letter-spacing:0.5px;color:#ACA899">Advanced</div>
<div class="grow" style="top:436px"></div><div class="t" style="left:606px;top:438px;letter-spacing:-0.25px">Build Action</div><div class="t" style="left:691px;top:438px">Content</div>
<div class="grow" style="top:453px"></div><div class="t" style="left:606px;top:455px;letter-spacing:-0.25px">Custom Tool</div>
<div class="grow" style="top:470px"></div><div class="t" style="left:606px;top:472px;width:81px;overflow:hidden;letter-spacing:-0.25px">Custom Tool Namespace</div>
<div class="gcat" style="top:487px"></div>
<div class="pm" style="left:591px;top:490px;border-color:#000;background:#D6D3C6"><i></i></div>
<div class="t b g" style="left:606px;top:489px;letter-spacing:0.5px;color:#ACA899">Misc</div>
<div class="grow" style="top:504px"></div><div class="t" style="left:606px;top:506px">File Name</div><div class="t" style="left:691px;top:506px">Hello.aspx</div>
<div class="grow" style="top:521px"></div><div class="t g" style="left:606px;top:523px">Full Path</div><div class="t g" style="left:691px;top:523px;width:104px;overflow:hidden">c:\inetpub\wwwroot\Chapter_02\Hello.aspx</div>
<div class="a" style="left:688px;top:436px;width:1px;height:51px;background:#DCD9CC"></div>
<div class="a" style="left:688px;top:504px;width:1px;height:34px;background:#DCD9CC"></div>
<!-- description pane stub -->
<div class="a" style="left:588px;top:546px;width:208px;height:5px;border:1px solid #BFBCAD;border-right:0;border-bottom:0;box-sizing:border-box"></div>
<!-- tabs -->
<div class="tabstrip" style="top:554px;height:21px"></div>
<div class="tabact" style="left:594px;top:554px;width:76px"></div>
<svg style="left:597px;top:556px" width="16" height="16" viewBox="0 0 16 16"><rect x="0.500" y="5.500" width="11" height="9" fill="#fff" stroke="#000"/><path d="M2 8h3M6 8h4M2 10h3M6 10h4M2 12h3M6 12h4" stroke="#333"/><path d="M4 5l4-4h5v6l-2-2l-2 2l-3-3z" fill="#777"/><rect x="13" y="0" width="2" height="6" fill="#2038A0"/></svg>
<div class="t" style="left:616px;top:559px;letter-spacing:-0.15px">Properties</div>
<svg style="left:677px;top:557px" width="14" height="14" viewBox="0 0 14 14"><circle cx="7" cy="7" r="6.500" fill="#1020C0" stroke="#000080"/><text x="7" y="11" text-anchor="middle" font-family="Liberation Sans,sans-serif" font-weight="bold" font-size="11" fill="#fff">?</text></svg>
<div class="t" style="left:695px;top:559px;letter-spacing:-0.35px;color:#8C8978">Dynamic Help</div>
<div class="a" style="left:766px;top:558px;width:1px;height:13px;background:#ACA899"></div>
</div>

<!-- ===== status bar ===== -->
<div id="status">
<div class="a" style="left:4px;top:578px;width:419px;height:18px;border:1px solid #C6C3B3;border-left:0;border-bottom:0;box-sizing:border-box"></div>
<div class="a" style="left:425px;top:578px;width:100px;height:18px;border:1px solid #C6C3B3;border-bottom:0;box-sizing:border-box"></div>
<div class="a" style="left:527px;top:578px;width:250px;height:18px;border:1px solid #C6C3B3;border-bottom:0;box-sizing:border-box"></div>
<div class="t" style="left:12px;top:581px">Done</div>
<svg style="left:783px;top:583px" width="13" height="13" viewBox="0 0 13 13"><path d="M12.500 1.500L1.500 12.500M12.500 5.500L5.500 12.500M12.500 9.500L9.500 12.500" stroke="#B8B4A2" stroke-width="1.400"/><path d="M12.500 2.800L2.800 12.500M12.500 6.800L6.800 12.500M12.500 10.800L10.800 12.500" stroke="#fff" stroke-width="0.800"/></svg>
</div>
</body>
</html>
